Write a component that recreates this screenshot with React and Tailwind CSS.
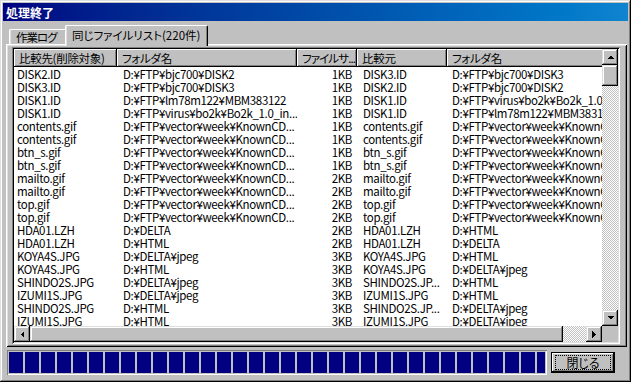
import React from "react";

const rows = [
  ["DISK2.ID", "D:¥FTP¥bjc700¥DISK2", "1KB", "DISK3.ID", "D:¥FTP¥bjc700¥DISK3"],
  ["DISK3.ID", "D:¥FTP¥bjc700¥DISK3", "1KB", "DISK2.ID", "D:¥FTP¥bjc700¥DISK2"],
  ["DISK1.ID", "D:¥FTP¥lm78m122¥MBM383122", "1KB", "DISK1.ID", "D:¥FTP¥virus¥bo2k¥Bo2k_1.0_in..."],
  ["DISK1.ID", "D:¥FTP¥virus¥bo2k¥Bo2k_1.0_in...", "1KB", "DISK1.ID", "D:¥FTP¥lm78m122¥MBM383122"],
  ["contents.gif", "D:¥FTP¥vector¥week¥KnownCD...", "1KB", "contents.gif", "D:¥FTP¥vector¥week¥KnownCD..."],
  ["contents.gif", "D:¥FTP¥vector¥week¥KnownCD...", "1KB", "contents.gif", "D:¥FTP¥vector¥week¥KnownCD..."],
  ["btn_s.gif", "D:¥FTP¥vector¥week¥KnownCD...", "1KB", "btn_s.gif", "D:¥FTP¥vector¥week¥KnownCD..."],
  ["btn_s.gif", "D:¥FTP¥vector¥week¥KnownCD...", "1KB", "btn_s.gif", "D:¥FTP¥vector¥week¥KnownCD..."],
  ["mailto.gif", "D:¥FTP¥vector¥week¥KnownCD...", "2KB", "mailto.gif", "D:¥FTP¥vector¥week¥KnownCD..."],
  ["mailto.gif", "D:¥FTP¥vector¥week¥KnownCD...", "2KB", "mailto.gif", "D:¥FTP¥vector¥week¥KnownCD..."],
  ["top.gif", "D:¥FTP¥vector¥week¥KnownCD...", "2KB", "top.gif", "D:¥FTP¥vector¥week¥KnownCD..."],
  ["top.gif", "D:¥FTP¥vector¥week¥KnownCD...", "2KB", "top.gif", "D:¥FTP¥vector¥week¥KnownCD..."],
  ["HDA01.LZH", "D:¥DELTA", "2KB", "HDA01.LZH", "D:¥HTML"],
  ["HDA01.LZH", "D:¥HTML", "2KB", "HDA01.LZH", "D:¥DELTA"],
  ["KOYA4S.JPG", "D:¥DELTA¥jpeg", "3KB", "KOYA4S.JPG", "D:¥HTML"],
  ["KOYA4S.JPG", "D:¥HTML", "3KB", "KOYA4S.JPG", "D:¥DELTA¥jpeg"],
  ["SHINDO2S.JPG", "D:¥DELTA¥jpeg", "3KB", "SHINDO2S.JP...", "D:¥HTML"],
  ["IZUMI1S.JPG", "D:¥DELTA¥jpeg", "3KB", "IZUMI1S.JPG", "D:¥HTML"],
  ["SHINDO2S.JPG", "D:¥HTML", "3KB", "SHINDO2S.JP...", "D:¥DELTA¥jpeg"],
  ["IZUMI1S.JPG", "D:¥HTML", "3KB", "IZUMI1S.JPG", "D:¥DELTA¥jpeg"],
];

const raised =
  "bg-[#c0c0c0] shadow-[inset_-1px_-1px_#000,inset_1px_1px_#dfdfdf,inset_-2px_-2px_#808080,inset_2px_2px_#fff]";
const headerCell =
  "shrink-0 h-full flex items-center pl-[5px] overflow-hidden whitespace-nowrap bg-[#c0c0c0] shadow-[inset_-1px_-1px_#000,inset_1px_1px_#fff,inset_-2px_-2px_#808080]";
const track =
  "bg-[image:conic-gradient(#fff_25%,#c0c0c0_0_50%,#fff_0_75%,#c0c0c0_0)] bg-[length:2px_2px]";

function Arrow({ dir }) {
  const vertical = dir === "up" || dir === "down";
  const w = vertical ? 7 : 4;
  const h = vertical ? 4 : 7;
  const pts = {
    up: "0,4 7,4 3.5,0.5",
    down: "0,0 7,0 3.5,3.5",
    left: "4,0 4,7 0.5,3.5",
    right: "0,0 0,7 3.5,3.5",
  }[dir];
  return (
    <svg width={w} height={h} viewBox={`0 0 ${w} ${h}`} shapeRendering="crispEdges">
      <polygon points={pts} fill="#000" />
    </svg>
  );
}

function ArrowBtn({ dir }) {
  return (
    <div className={`w-[16px] h-[16px] shrink-0 flex items-center justify-center ${raised}`}>
      <Arrow dir={dir} />
    </div>
  );
}

export default function App() {
  return (
    <div className="w-[631px] h-[382px] bg-[#c0c0c0] p-[3px] flex flex-col overflow-hidden font-['Noto_Sans_CJK_JP',sans-serif] text-black text-[12px] shadow-[inset_-1px_-1px_#000,inset_1px_1px_#dfdfdf,inset_-2px_-2px_#808080,inset_2px_2px_#fff]">
      {/* Title bar */}
      <div className="h-[18px] shrink-0 flex items-center pl-[3px] bg-linear-to-r from-[#000080] to-[#1084d0] text-white font-bold text-[12px] leading-[13px]">
        処理終了
      </div>

      {/* Tabs */}
      <div className="h-[23px] shrink-0 flex items-end pl-[6px] relative z-10 text-[11.5px] [font-feature-settings:'palt']">
        <div className="w-[58px] h-[15px] bg-[#c0c0c0] border-t border-l border-r border-t-white border-l-white border-r-black rounded-t-[2px] pl-[6px] pt-[1px] leading-[13px] whitespace-nowrap tracking-[-1px] shadow-[inset_-1px_0_#808080,inset_1px_0_#dfdfdf]">
          作業ログ
        </div>
        <div className="-ml-[2px] w-[143px] h-[21px] -mb-[2px] bg-[#c0c0c0] border-t border-l border-r border-t-white border-l-white border-r-black rounded-t-[2px] pl-[6px] pt-[3px] leading-[13px] whitespace-nowrap shadow-[inset_-1px_0_#808080,inset_1px_0_#dfdfdf]">
          同じファイルリスト(220件)
        </div>
      </div>

      {/* Tab panel */}
      <div className="ml-[3px] w-[621px] h-[303px] shrink-0 pt-[3px] pl-[6px] shadow-[inset_1px_1px_#fff,inset_-1px_-1px_#000,inset_2px_2px_#dfdfdf,inset_-2px_-2px_#808080]">
        {/* List view */}
        <div className="w-[608px] h-[297px] p-[2px] bg-white shadow-[inset_1px_1px_#808080,inset_-1px_-1px_#fff,inset_2px_2px_#000,inset_-2px_-2px_#dfdfdf]">
          <div className="flex h-full">
            <div className="w-[588px] flex flex-col overflow-hidden">
              {/* Header */}
              <div className="h-[18px] shrink-0 flex leading-[13px] text-[11.5px] tracking-[-0.3px] [font-feature-settings:'palt']">
                <div className={`w-[103px] ${headerCell}`}>比較先(削除対象)</div>
                <div className={`w-[180px] ${headerCell}`}>フォルダ名</div>
                <div className={`w-[60px] ${headerCell} tracking-[-0.9px]`}>ファイルサ...</div>
                <div className={`w-[90px] ${headerCell}`}>比較元</div>
                <div className={`w-[200px] ${headerCell}`}>フォルダ名</div>
              </div>
              {/* Body */}
              <div className="flex-1 overflow-hidden pt-[1px] bg-white text-[11.5px] tracking-[-0.35px]">
                {rows.map((r, i) => (
                  <div key={i} className="flex h-[13px] leading-[13px] whitespace-nowrap">
                    <div className="w-[103px] shrink-0 pl-[3px] overflow-x-clip">{r[0]}</div>
                    <div className="w-[180px] shrink-0 pl-[6px] overflow-x-clip">{r[1]}</div>
                    <div className="w-[60px] shrink-0 pr-[5px] text-right overflow-x-clip">{r[2]}</div>
                    <div className="w-[90px] shrink-0 pl-[6px] overflow-x-clip">{r[3]}</div>
                    <div className="w-[220px] shrink-0 pl-[5px] overflow-x-clip">{r[4]}</div>
                  </div>
                ))}
              </div>
              {/* Horizontal scrollbar */}
              <div className="h-[16px] shrink-0 flex">
                <ArrowBtn dir="left" />
                <div className={`w-[533px] h-full shrink-0 ${raised}`} />
                <div className={`flex-1 h-full ${track}`} />
                <ArrowBtn dir="right" />
              </div>
            </div>
            {/* Vertical scrollbar */}
            <div className="w-[16px] flex flex-col">
              <ArrowBtn dir="up" />
              <div className={`h-[21px] w-full shrink-0 ${raised}`} />
              <div className={`flex-1 w-full ${track}`} />
              <ArrowBtn dir="down" />
              <div className="h-[16px] w-full shrink-0 bg-[#c0c0c0]" />
            </div>
          </div>
        </div>
      </div>

      {/* Bottom: progress + button */}
      <div className="mt-[3px] h-[25px] shrink-0 flex">
        <div className="ml-[4px] w-[540px] h-[25px] p-[2px] shadow-[inset_1px_1px_#808080,inset_-1px_-1px_#fff]">
          <div className="w-full h-full flex gap-[2px] overflow-hidden">
            {Array.from({ length: 34 }).map((_, i) => (
              <div key={i} className="w-[14px] h-full shrink-0 bg-[#000080]" />
            ))}
          </div>
        </div>
        <div className="ml-[4px] mt-[2px] w-[64px] h-[21px] border border-black flex">
          <div className="flex-1 flex shadow-[inset_-1px_-1px_#000,inset_1px_1px_#fff,inset_-2px_-2px_#808080]">
            <div className="flex-1 mx-[3px] my-[2px] border border-dotted border-black flex items-center justify-center leading-[13px] [font-feature-settings:'palt']">
              閉じる
            </div>
          </div>
        </div>
      </div>
    </div>
  );
}
